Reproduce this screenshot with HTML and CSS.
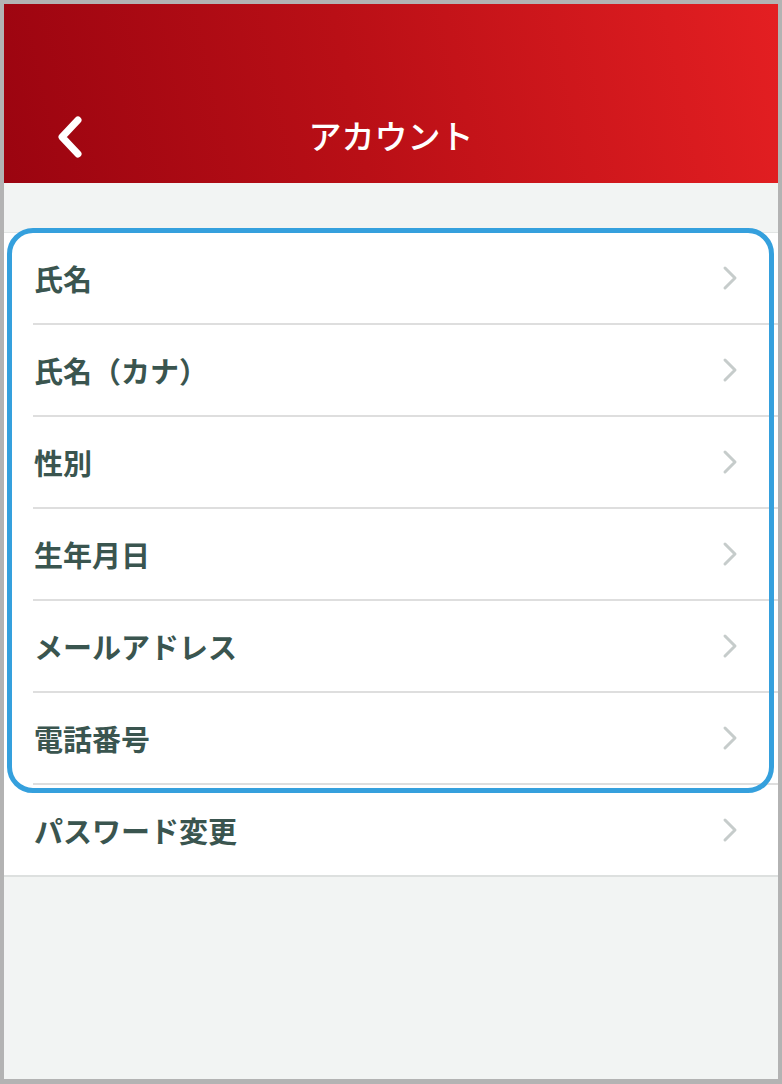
FILE: index.html
```html
<!DOCTYPE html>
<html lang="ja">
<head>
  <meta charset="UTF-8" />
  <meta name="viewport" content="width=device-width, initial-scale=1" />
  <title>アカウント</title>
  <link rel="stylesheet" href="styles.css">
</head>
<body>

<div class="frame">
  <div class="screen">
    <header class="topbar">
      <a class="back" href="#" aria-label="戻る">
        <svg width="40" height="50" viewBox="0 0 40 50">
          <polyline points="27,8 11,25 27,42" fill="none" stroke="#fff" stroke-width="7" stroke-linecap="round" stroke-linejoin="round"/>
        </svg>
      </a>
      <h1>アカウント</h1>
    </header>

    <main class="content">
      <ul class="menu">
        <li><a href="#"><span>氏名</span><svg class="chev" width="16" height="26" viewBox="0 0 16 26"><polyline points="3,3 13,13 3,23" /></svg></a></li>
        <li><a href="#"><span>氏名（カナ）</span><svg class="chev" width="16" height="26" viewBox="0 0 16 26"><polyline points="3,3 13,13 3,23" /></svg></a></li>
        <li><a href="#"><span>性別</span><svg class="chev" width="16" height="26" viewBox="0 0 16 26"><polyline points="3,3 13,13 3,23" /></svg></a></li>
        <li><a href="#"><span>生年月日</span><svg class="chev" width="16" height="26" viewBox="0 0 16 26"><polyline points="3,3 13,13 3,23" /></svg></a></li>
        <li><a href="#"><span>メールアドレス</span><svg class="chev" width="16" height="26" viewBox="0 0 16 26"><polyline points="3,3 13,13 3,23" /></svg></a></li>
        <li><a href="#"><span>電話番号</span><svg class="chev" width="16" height="26" viewBox="0 0 16 26"><polyline points="3,3 13,13 3,23" /></svg></a></li>
        <li class="last"><a href="#"><span>パスワード変更</span><svg class="chev" width="16" height="26" viewBox="0 0 16 26"><polyline points="3,3 13,13 3,23" /></svg></a></li>
      </ul>
    </main>

    <!-- 注釈の枠 -->
    <div class="highlight"></div>
  </div>
</div>

</body>
</html>
```

FILE: styles.css
```css
* { box-sizing: border-box; }
body {
  margin:0; background:#b3b3b3;
  font-family: "Noto Sans CJK JP", "Noto Sans", sans-serif;
}
.frame {
  width:782px; height:1084px;
  border-style:solid; border-color:#b3b3b3;
  border-width:4px 4px 5px 4px;
}
.screen {
  position:relative;
  height:100%;
  background:#f2f4f3;
}
.topbar {
  height:179px;
  background:linear-gradient(78deg, #9b0410 0%, #b90f16 45%, #e41f22 100%);
  display:flex; align-items:center; justify-content:center;
  position:relative;
  padding-top:118px; padding-bottom:34px;
}
.topbar h1 {
  margin:0; color:#fff; font-size:33px; font-weight:500; line-height:1;
}
.back {
  position:absolute; left:47px; top:108px;
  display:block; width:40px; height:50px;
}
.content {
  padding-top:49px;
}
.menu {
  list-style:none; margin:0; padding:0;
  background:#fff;
  border-top:1px solid #e2e5e4;
}
.menu li a {
  display:flex; align-items:center; justify-content:space-between;
  height:92px;
  margin-left:29px;
  padding-right:40px;
  border-bottom:2px solid #dedede;
  color:#3a554f; text-decoration:none;
  font-size:29px; font-weight:700;
}
.menu li a span { padding-left:1px; }
.menu li.last a {
  margin-left:0; padding-left:29px;
  border-bottom-color:#dde0df;
}
.chev {
  display:block;
  fill:none; stroke:#c6cccb; stroke-width:3; stroke-linecap:round; stroke-linejoin:round;
}
.highlight {
  position:absolute; left:3px; top:224px;
  width:767px; height:565px;
  border:5px solid #35a0dd; border-radius:26px;
  pointer-events:none;
}
```
